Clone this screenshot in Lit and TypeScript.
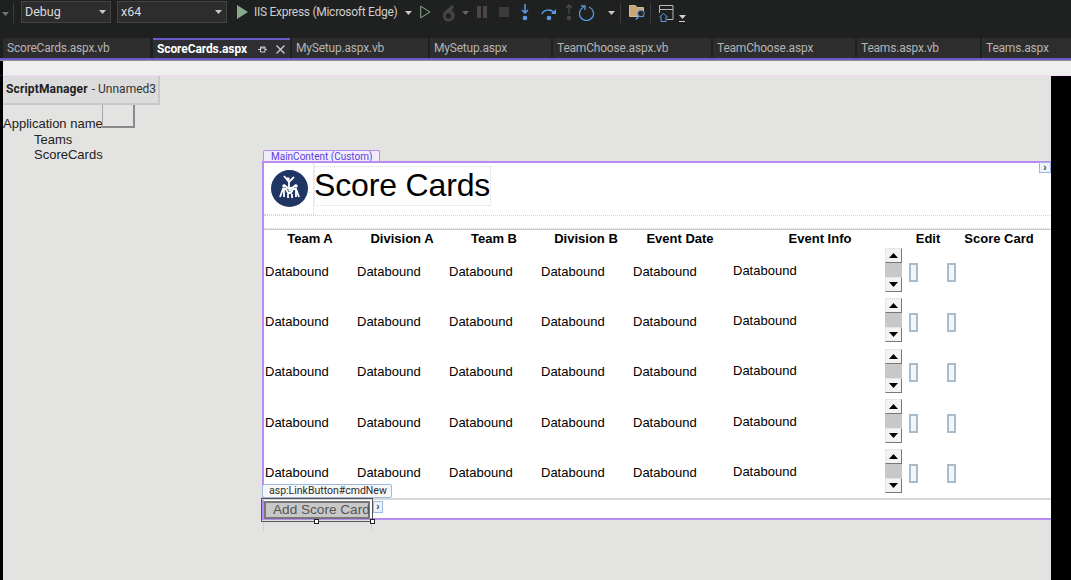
import { LitElement, html, css, svg } from "lit";
import { customElement } from "lit/decorators.js";

const tabs = [
  { t: "ScoreCards.aspx.vb", w: 147 },
  { t: "ScoreCards.aspx", w: 137, active: true },
  { t: "MySetup.aspx.vb", w: 136 },
  { t: "MySetup.aspx", w: 121 },
  { t: "TeamChoose.aspx.vb", w: 158 },
  { t: "TeamChoose.aspx", w: 142 },
  { t: "Teams.aspx.vb", w: 123 },
  { t: "Teams.aspx", w: 89 },
];

const heads = ["Team A", "Division A", "Team B", "Division B", "Event Date", "Event Info", "Edit", "Score Card"];

const caret = (ml = 0, fill = "#c8c8c8") =>
  html`<svg class="caret" style="margin-left:${ml}px" width="9" height="5" viewBox="0 0 9 5"><path d="M1 0h7L4.500 4z" fill=${fill}/></svg>`;

const ico = (w: number, h: number, body: unknown, ml: number, mt: number) =>
  html`<svg class="ico" style="margin-left:${ml}px;margin-top:${mt}px" width=${w} height=${h} viewBox="0 0 ${w} ${h}" fill="none">${body}</svg>`;

@customElement("app-root")
export class AppRoot extends LitElement {
  static styles = css`
    :host { display: block; width: 1071px; height: 580px; overflow: hidden; position: relative; background: #1f2020; font-family: "Liberation Sans", Arial, sans-serif; }
    .toolbar { height: 38px; display: flex; align-items: flex-start; padding-top: 1px; box-sizing: border-box; color: #d0d0d0; font: 12px Roboto, sans-serif; }
    .toolbar > * { flex: none; }
    .lead { margin: 11px 0 0 2px; }
    .sep { width: 1px; height: 20px; background: #3c3c3c; margin-top: 2px; }
    .sep1 { margin-left: 3px; }
    .sep2 { margin-left: 4px; }
    .sep3 { margin-left: 4px; }
    .combo { height: 22px; box-sizing: border-box; background: #2d2d2e; border: 1px solid #434346; display: flex; align-items: center; justify-content: space-between; padding: 0 1px 1px 3px; color: #dcdcdc; font-size: 12.500px; flex: none; }
    .debug { margin-left: 7px; width: 90px; }
    .x64 { margin-left: 6px; width: 110px; }
    .caret { margin-top: 10px; flex: none; }
    .combo .caret { margin-top: 2px; margin-right: 2px; }
    .run { margin: 3px 0 0 6px; line-height: 17px; white-space: nowrap; color: #cfcfcf; font-size: 12px; letter-spacing: -0.280px; width: 145px; }
    .last { margin: 13px 0 0 4px; }
    .tabs { height: 20px; display: flex; gap: 2px; padding-left: 3px; }
    .tab { box-sizing: border-box; height: 20px; flex: none; background: #2d2d2d; color: #b4b4b4; font: 12px Roboto, sans-serif; letter-spacing: -0.200px; padding: 0 0 1px 4px; white-space: nowrap; overflow: hidden; display: flex; align-items: center; }
    .tab.active { background: #2e2e33; border-top: 2px solid #6a5acd; color: #fff; font-weight: 700; letter-spacing: -0.100px; margin-left: 1px; padding-bottom: 0; }
    .pin { margin-left: auto; margin-right: 5px; display: flex; gap: 9px; align-items: center; }
    .accent { height: 2px; background: #6a5acd; }
    .greyline { height: 1px; background: #8f8f8f; }
    .strip { height: 14px; background: #efefef; border-left: 3px solid #000; }
    .pink { height: 1px; background: #efd9f5; margin-left: 3px; }
    .surface { display: flex; height: 504px; border-left: 3px solid #000; background: #e3e3e1; color: #222; font-size: 13px; }
    .canvas { width: 1048px; flex: none; overflow: hidden; position: relative; display: flex; }
    .black { flex: 1; background: #000; }
    .nav { width: 259px; flex: none; }
    .sm { width: 157px; height: 29px; box-sizing: border-box; background: #dcdcdc; border-right: 2px solid #c8c8c8; border-bottom: 2px solid #c8c8c8; display: flex; align-items: center; padding: 0 0 2px 3px; font: 12px Roboto, sans-serif; color: #333; white-space: nowrap; }
    .sm b { font-weight: 700; color: #222; margin-right: 4px; letter-spacing: 0.150px; }
    .app { display: flex; height: 27px; white-space: nowrap; line-height: 15px; }
    .app span { padding-top: 11px; width: 99px; }
    .app i { display: block; box-sizing: border-box; width: 33px; height: 23px; border-left: 1px solid #a8a8a8; border-right: 2px solid #8a8a8a; border-bottom: 2px solid #8a8a8a; }
    .link { padding-left: 31px; line-height: 15px; }
    .work { padding-top: 74px; flex: none; }
    .tagtext { display: block; width: 117px; height: 11px; box-sizing: border-box; border: 1px solid #b78cf0; border-bottom: 0; border-radius: 2px 2px 0 0; background: #f1ecfa; color: #5a3fe0; font: 10px/12px Roboto, sans-serif; padding-left: 7px; white-space: nowrap; margin-left: 1px; }
    .main { width: 900px; height: 359px; box-sizing: border-box; border: 2px solid #b78cf0; background: #fff; color: #000; position: relative; }
    .smart { position: absolute; box-sizing: border-box; background: #eef2fa; border: 1px solid #9db8e0; color: #345; font: 700 10px/9px "Liberation Sans", sans-serif; text-align: center; }
    .smart.top { left: 775px; top: -1px; width: 12px; height: 11px; }
    .head { display: flex; height: 52px; }
    .logoCell { width: 50px; box-sizing: border-box; border: 1px dotted #d8d8d8; border-width: 0 1px 1px 0; padding: 7px 0 0 7px; }
    .logoCell svg { display: block; }
    .title { box-sizing: border-box; width: 177px; height: 40px; margin-top: 3px; border: 1px dotted #dcdcdc; font-size: 32px; line-height: 36px; text-indent: -1px; letter-spacing: -0.150px; white-space: nowrap; }
    .dotted { height: 14px; box-sizing: border-box; border-top: 1px dotted #d4d4d4; border-bottom: 1px dotted #d4d4d4; }
    .rule { height: 1px; background: #c8c8c8; }
    .ths { display: grid; grid-template-columns: 92px 92px 92px 92px 96px 184px 32px 110px; height: 15px; }
    .th { font-weight: 700; font-size: 13px; line-height: 17px; text-align: center; white-space: nowrap; }
    .grid { display: grid; grid-template-columns: 92px 92px 92px 92px 100px 152px 20px 45px 100px; font-size: 13px; margin-left: 1px; }
    .c { height: 50.330px; display: flex; align-items: center; white-space: nowrap; }
    .c.d { padding-top: 2px; box-sizing: border-box; }
    .c.info { padding-top: 0; }
    .spin { display: flex; flex-direction: column; width: 17px; height: 44px; }
    .b { height: 15px; box-sizing: border-box; background: #f3f3f3; border: 1px solid #e6e6e6; border-right-color: #777; border-bottom-color: #777; display: flex; align-items: center; justify-content: center; }
    .t { flex: 1; background: #c8c8c8; }
    .ed { width: 9px; height: 19px; box-sizing: border-box; border: 2px solid #a9bccb; background: #f2f6f9; margin: 4px 0 0 4px; }
    .ed2 { margin-left: -3px; }
    .line2 { position: absolute; left: -2px; right: 0; top: 335px; height: 2px; background: #d8d8d8; }
    .lbtag { position: absolute; left: -2px; top: 321px; height: 14px; box-sizing: border-box; width: 130px; border: 1px solid #9db8e0; border-radius: 2px; background: #f7f7f7; color: #2b2b2b; font: 10.500px/12px Roboto, sans-serif; padding-left: 6px; white-space: nowrap; z-index: 2; }
    .btn { position: absolute; left: 0; top: 338px; width: 106px; height: 18px; box-sizing: border-box; border: 2px solid #777; outline: 1px solid #555; outline-offset: 2px; background: #c8c8c8; color: #555; font-size: 13.600px; line-height: 14px; padding-left: 7px; white-space: nowrap; z-index: 2; }
    .smart.sb { left: 109px; top: 338px; width: 10px; height: 12px; line-height: 10px; z-index: 3; }
    .handle { position: absolute; width: 5px; height: 5px; box-sizing: border-box; background: #fff; border: 1px solid #222; z-index: 3; top: 356px; }
    .h1 { left: 50px; }
    .h2 { left: 106px; }
    .guide { position: absolute; top: 445px; width: 1px; height: 10px; background: #d0d0d0; }
    .g1 { left: 260px; }
    .g2 { left: 368px; }
  `;

  render() {
    const rows = [0, 1, 2, 3, 4];
    const blue = "#5b9be6";
    return html`
      <div class="toolbar">
        <svg class="lead" width="8" height="5" viewBox="0 0 8 5"><path d="M0 0h7L3.500 4z" fill="#777"/></svg>
        <div class="sep sep1"></div>
        <div class="combo debug">Debug ${caret()}</div>
        <div class="combo x64">x64 ${caret()}</div>
        ${ico(11, 14, svg`<path d="M0 0l11 7-11 7z" fill="#88a98b"/>`, 10, 4)}
        <span class="run">IIS Express (Microsoft Edge)</span>
        ${caret(5)}
        ${ico(11, 14, svg`<path d="M.700 1.200l9.300 5.800-9.300 5.800z" stroke="#88a98b"/>`, 7, 4)}
        ${ico(14, 17, svg`<path d="M10 0C8 3 1 5 1 11c0 3.500 2.500 5.500 5.500 5.500S12.500 14 12.500 11c0-2-.5-3-.5-5-1 1-2 1.500-2 1.500 0-2 .5-4 2-6z" fill="#454545"/><circle cx="6.500" cy="11" r="2.800" fill="#1f2020"/>`, 11, 4)}
        ${caret(5, "#666")}
        ${ico(10, 12, svg`<path d="M0 0h4v12H0zM6 0h4v12H6z" fill="#4d4646"/>`, 7, 5)}
        ${ico(10, 12, svg`<path d="M0 1h10v10H0z" fill="#3c3c3c"/>`, 12, 5)}
        ${ico(10, 17, svg`<path d="M5 0v9M2 6l3 3 3-3" stroke=${blue} stroke-width="1.500"/><circle cx="5" cy="14" r="2.300" fill=${blue}/>`, 11, 3)}
        ${ico(16, 16, svg`<path d="M1 9c1-4 9-6 12-1" stroke=${blue} stroke-width="1.500"/><path d="M15 4v5h-5z" fill=${blue}/><circle cx="8" cy="13" r="2.300" fill=${blue}/>`, 11, 4)}
        ${ico(8, 17, svg`<path d="M4 1v9M1 4l3-3 3 3" stroke="#4a4a4a" stroke-width="1.300"/><circle cx="4" cy="14" r="2.300" fill="#444"/>`, 8, 3)}
        ${ico(16, 17, svg`<path d="M5 3a7 7 0 1 0 5 0" stroke=${blue} stroke-width="1.300"/><path d="M2 2h4v4" stroke=${blue} stroke-width="1.300"/>`, 6, 3)}
        ${caret(12)}
        <div class="sep sep2"></div>
        ${ico(17, 17, svg`<path d="M.500 2.500h6l1.500 2h6.500v9H.500z" fill="#c8a877" stroke="#d7bb8d"/><circle cx="12" cy="10.500" r="3.300" fill="#2a2a2a" stroke=${blue}/><path d="M10 13L7 16.500" stroke=${blue} stroke-width="1.500"/>`, 8, 2)}
        <div class="sep sep3"></div>
        ${ico(15, 17, svg`<path d="M.500 8V.500h13.500v14H8M.500 4.500h13.500" stroke="#b8b8b8"/><path d="M.500 12l4-3.500 4 3.500M2 11.500v5h5v-5" stroke=${blue}/>`, 8, 4)}
        <svg class="last" width="9" height="9" viewBox="0 0 9 9"><path d="M1 7h6v1H1zM1 1h7L4.500 5z" fill="#d0d0d0"/></svg>
      </div>
      <div class="tabs">
        ${tabs.map(
          (t) => html`<div class="tab ${t.active ? "active" : ""}" style="width:${t.w}px">${t.t}${t.active
            ? html`<span class="pin"><svg width="9" height="9" viewBox="0 0 9 9"><path d="M0 4.500h2.500M2.500 2v5h4.500V2zM2.500 3h4.500M7 4.500h2" stroke="#d0d0d0" fill="none"/></svg><svg width="9" height="9" viewBox="0 0 9 9"><path d="M.500.500l8 8M8.500.500l-8 8" stroke="#d0d0d0" stroke-width="1.200"/></svg></span>`
            : ""}</div>`
        )}
      </div>
      <div class="accent"></div>
      <div class="greyline"></div>
      <div class="strip"></div>
      <div class="pink"></div>
      <div class="surface">
        <div class="canvas">
          <div class="nav">
            <div class="sm"><b>ScriptManager</b> - Unnamed3</div>
            <div class="app"><span>Application name</span><i></i></div>
            <div class="link">Teams</div>
            <div class="link">ScoreCards</div>
          </div>
          <div class="work">
            <span class="tagtext">MainContent (Custom)</span>
            <div class="main">
              <span class="smart top">›</span>
              <div class="head">
                <div class="logoCell">
                  <svg width="38" height="38" viewBox="0 0 38 38">
                    <circle cx="18.500" cy="18.500" r="18.500" fill="#1f3564"/>
                    <g stroke="#fff" fill="none" stroke-width="1.800">
                      <path d="M13 6l5 6 5-5M18 12v5"/>
                      <path d="M13 15l4 3 4 0 4-3"/>
                      <path d="M9 27l3-8h3l2 4 3 0 2-4h3l3 8"/>
                      <path d="M13 20v7M25 20v7M17 24v4M21 24v4"/>
                    </g>
                    <g fill="#fff">
                      <circle cx="17" cy="9" r="1.700"/>
                      <circle cx="13" cy="16" r="1.700"/>
                      <circle cx="25" cy="16" r="1.700"/>
                      <circle cx="19" cy="20" r="1.700"/>
                    </g>
                  </svg>
                </div>
                <div class="title">Score Cards</div>
              </div>
              <div class="dotted"></div>
              <div class="rule"></div>
              <div class="ths">${heads.map((h) => html`<div class="th">${h}</div>`)}</div>
              <div class="grid">
                ${rows.map(
                  () => html`
                    ${[0, 1, 2, 3, 4].map(() => html`<div class="c d">Databound</div>`)}
                    <div class="c d info">Databound</div>
                    <div class="c">
                      <div class="spin">
                        <div class="b"><svg width="9" height="5" viewBox="0 0 9 5"><path d="M4.500 0l4.500 5H0z"/></svg></div>
                        <div class="t"></div>
                        <div class="b"><svg width="9" height="5" viewBox="0 0 9 5"><path d="M0 0h9L4.500 5z"/></svg></div>
                      </div>
                    </div>
                    <div class="c"><div class="ed"></div></div>
                    <div class="c"><div class="ed ed2"></div></div>
                  `
                )}
              </div>
              <div class="line2"></div>
              <div class="lbtag">asp:LinkButton#cmdNew</div>
              <div class="btn">Add Score Card</div>
              <span class="smart sb">›</span>
              <span class="handle h1"></span>
              <span class="handle h2"></span>
            </div>
          </div>
          <span class="guide g1"></span>
          <span class="guide g2"></span>
        </div>
        <div class="black"></div>
      </div>
    `;
  }
}
